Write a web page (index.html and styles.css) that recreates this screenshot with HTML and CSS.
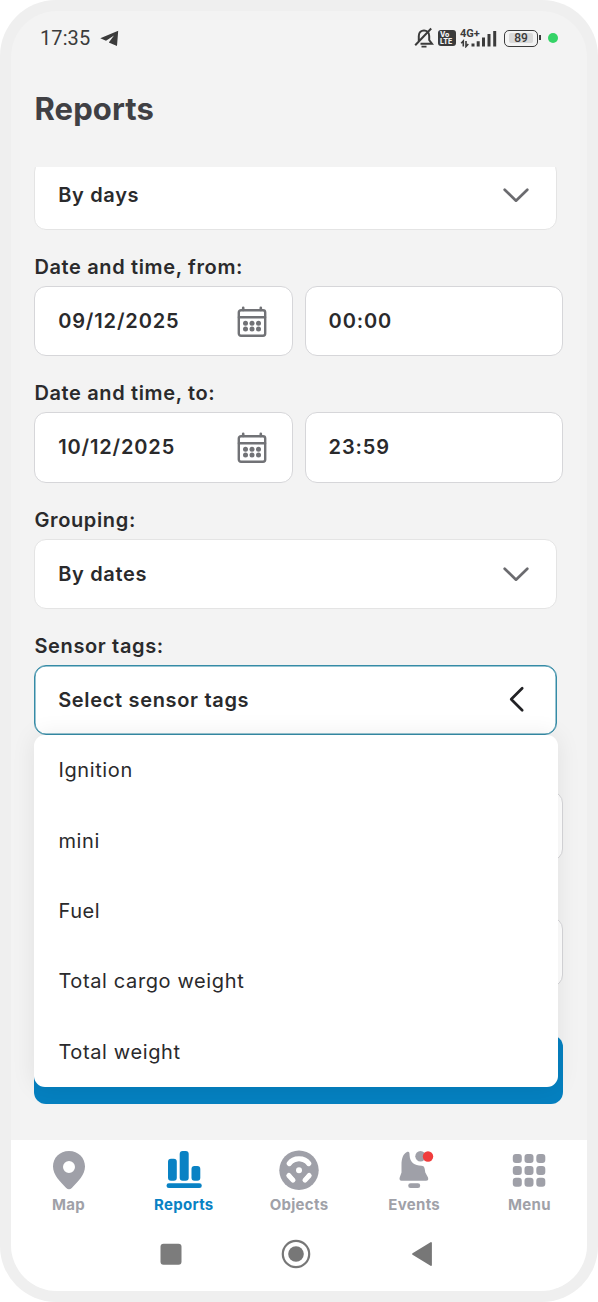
FILE: index.html
```html
<!DOCTYPE html>
<html lang="en">
<head>
<meta charset="utf-8">
<title>Reports</title>
<link rel="stylesheet" href="styles.css">
</head>
<body>
<svg class="defs" width="0" height="0" aria-hidden="true">
  <symbol id="calendar" viewBox="0 0 32 32">
    <rect x="2.8" y="4.3" width="26.4" height="25.4" rx="2.2" fill="none" stroke="#717276" stroke-width="2.4"/>
    <path d="M3 11.2H29M7.2 4V1.8M24.8 4V1.8" stroke="#717276" stroke-width="2.6" stroke-linecap="round"/>
    <g fill="#717276"><circle cx="9.5" cy="17.3" r="2.5"/><circle cx="16" cy="17.3" r="2.5"/><circle cx="22.5" cy="17.3" r="2.5"/><circle cx="9.5" cy="23" r="2.5"/><circle cx="16" cy="23" r="2.5"/><circle cx="22.5" cy="23" r="2.5"/></g>
  </symbol>
  <symbol id="down" viewBox="0 0 28 16">
    <path d="M2.7 2.8L14 13.7L25.3 2.8" fill="none" stroke="#6b6b6f" stroke-width="2.7" stroke-linecap="round" stroke-linejoin="round"/>
  </symbol>
</svg>
<div class="phone">
  <div class="screen">
    <header class="status">
      <span class="clock">17:35</span>
      <svg class="plane" width="19" height="17" viewBox="0 0 19 17"><path d="M.3 8.2L18.2.7L17 16L8.8 12.6L14 5.6L6 10.7Z" fill="#3b3b3b"/></svg>
      <div class="indicators">
        <svg class="mute" width="20" height="22" viewBox="0 0 20 22" fill="none" stroke="#3b3b3b" stroke-width="2"><path d="M4.8 15V9C4.8 1.5 15.2 1.5 15.2 9V13L18 16.8H6.5M1.2 18.3L17.2 1.5"/><path d="M7.5 19.7H12.5" stroke-width="1.8"/></svg>
        <span class="volte"><b>Vo</b><b>LTE</b></span>
        <span class="network">
          <span class="gen">4G+</span>
          <svg width="37" height="17" viewBox="0 0 37 17" fill="#3b3b3b"><path d="M11.5 12.600h3V15.500h-3zM16.700 10.200h3V15.500h-3zM22 6.500h3V15.500h-3zM27.500 3h3V15.500h-3zM33.200 0h3V15.500h-3z"/><path d="M3.300 15.500V10L1.200 12.200M6 10V15.500L8.300 13" fill="none" stroke="#3b3b3b" stroke-width="1.600"/></svg>
        </span>
        <span class="battery"><span class="level">89</span></span>
        <i class="live"></i>
      </div>
    </header>
    <h1 class="title">Reports</h1>
    <main class="form">
      <section class="field first"><div class="box select"><span>By days</span><svg class="chevron"><use href="#down"/></svg></div></section>
      <section class="field">
        <label class="label">Date and time, from:</label>
        <div class="pair"><div class="box"><span>09/12/2025</span><svg class="cal"><use href="#calendar"/></svg></div><div class="box"><span>00:00</span></div></div>
      </section>
      <section class="field">
        <label class="label">Date and time, to:</label>
        <div class="pair"><div class="box"><span>10/12/2025</span><svg class="cal"><use href="#calendar"/></svg></div><div class="box"><span>23:59</span></div></div>
      </section>
      <section class="field">
        <label class="label">Grouping:</label>
        <div class="box select"><span>By dates</span><svg class="chevron"><use href="#down"/></svg></div>
      </section>
      <section class="field">
        <label class="label">Sensor tags:</label>
        <div class="box select open"><span>Select sensor tags</span>
          <svg class="back" width="16" height="28" viewBox="0 0 16 28"><path d="M13.2 2.3L2.2 13.3L13.2 24.300" fill="none" stroke="#222225" stroke-width="2.700" stroke-linecap="round" stroke-linejoin="round"/></svg>
          <ul class="menu"><li>Ignition</li><li>mini</li><li>Fuel</li><li>Total cargo weight</li><li>Total weight</li></ul>
        </div>
      </section>
      <section class="field"><div class="label"></div><div class="box"></div></section>
      <section class="field"><div class="label"></div><div class="box"></div></section>
      <div class="submit"></div>
    </main>
    <nav class="tabs">
      <div class="tab"><svg width="40" height="40" viewBox="0 0 40 40"><path fill-rule="evenodd" d="M20 1C10.5 1 4 8 4 16.5C4 25 11 31.500 17.200 38Q20 40.600 22.800 38C29 31.500 36 25 36 16.500C36 8 29.500 1 20 1ZM20 11A6 6 0 1 1 20 23A6 6 0 1 1 20 11Z" fill="#9fa0a8"/></svg><span>Map</span></div>
      <div class="tab active"><svg width="40" height="40" viewBox="0 0 40 40" fill="#0982c4"><rect x="4" y="8.800" width="8.800" height="22" rx="3"/><rect x="15.700" y="1" width="9" height="29.800" rx="3"/><rect x="27.500" y="16" width="8.800" height="14.800" rx="3"/><rect x="2.500" y="33.300" width="35.300" height="4.800" rx="2.400"/></svg><span>Reports</span></div>
      <div class="tab"><svg width="40" height="40" viewBox="0 0 40 40"><circle cx="20" cy="20.300" r="19.700" fill="#9fa0a8"/><g stroke="#fff" fill="none" stroke-linecap="round"><path d="M10.300 13.500C14.500 7.300 25.500 7.300 29.700 13.500" stroke-width="5.200"/><path d="M9.800 25.500L14 30.200M30.200 25.500L26 30.200" stroke-width="5"/></g><circle cx="20" cy="20" r="8.600" fill="#9fa0a8"/><circle cx="20" cy="20.300" r="3" fill="#fff"/></svg><span>Objects</span></div>
      <div class="tab"><svg width="40" height="40" viewBox="0 0 40 40" fill="#9fa0a8"><path d="M12.500 2.200C15.800 .8 15.500 3.500 15.600 5.500C16 12.500 20.500 15.500 27.500 15.700C30.800 15.800 30.700 18.500 31.300 22.500L34 27.500Q35 30.700 32 30.700H7.500Q4.900 30.500 5.700 27.500L7.500 22.500V15C7.500 8 9.500 3.700 12.500 2.200Z"/><circle cx="26.500" cy="6.200" r="5.200"/><rect x="14.200" y="33.300" width="12" height="4.700" rx="2.350"/><circle cx="34" cy="6.500" r="5.200" fill="#f03c3c"/></svg><span>Events</span></div>
      <div class="tab"><svg width="40" height="40" viewBox="0 0 40 40" fill="#9fa0a8"><rect x="3.800" y="4" width="9" height="9" rx="3"/><rect x="15.500" y="4" width="9" height="9" rx="3"/><rect x="27.300" y="4" width="9" height="9" rx="3"/><rect x="3.800" y="15.900" width="9" height="9" rx="3"/><rect x="15.500" y="15.900" width="9" height="9" rx="3"/><rect x="27.300" y="15.900" width="9" height="9" rx="3"/><rect x="3.800" y="27.700" width="9" height="9" rx="3"/><rect x="15.500" y="27.700" width="9" height="9" rx="3"/><rect x="27.300" y="27.700" width="9" height="9" rx="3"/></svg><span>Menu</span></div>
    </nav>
    <footer class="system">
      <svg width="30" height="30" viewBox="0 0 30 30"><rect x="4.500" y="4.700" width="21" height="21" rx="3" fill="#7c7c7c"/></svg>
      <svg width="30" height="30" viewBox="0 0 30 30"><circle cx="15" cy="15" r="13.200" fill="none" stroke="#777" stroke-width="2.200"/><circle cx="15" cy="15" r="7.800" fill="#777"/></svg>
      <svg width="30" height="30" viewBox="0 0 30 30"><path d="M6 15L24 4V26Z" fill="#777" stroke="#777" stroke-width="1.800" stroke-linejoin="round"/></svg>
    </footer>
  </div>
</div>
</body>
</html>
```
FILE: styles.css
```css
* { box-sizing: border-box; }
body { margin: 0; background: #fff; font-family: Inter, sans-serif; color: #2a2a2c; }
.defs { display: block; }
.phone { width: 598px; height: 1302px; padding: 11px; background: #efefef; border-radius: 56px; }
.screen { height: 1280px; background: #f3f3f3; border-radius: 46px; overflow: hidden; display: flex; flex-direction: column; }
.status { height: 54px; padding: 0 29px; display: flex; align-items: center; color: #3b3b3b; }
.clock { font: 400 20px Roboto, sans-serif; letter-spacing: .1px; width: 60px; }
.indicators { margin-left: auto; display: flex; align-items: center; }
.mute { margin-right: -1px; }
.volte { width: 18px; height: 16px; margin: 0 4px 0 5px; border-radius: 3px; background: #3b3b3b; color: #f3f3f3; display: flex; flex-direction: column; padding: 1px 2px; font-size: 7px; line-height: 7px; }
.volte b { font-weight: 800; }
.network { width: 38px; height: 19px; display: grid; }
.network > * { grid-area: 1 / 1; }
.network svg { align-self: end; }
.gen { font: 700 11px/11px Roboto, sans-serif; position: relative; top: -1px; }
.battery { width: 34px; height: 17px; margin-left: 6px; padding: 2px 4px; border: 1.5px solid #3b3b3b; border-radius: 5px; position: relative; }
.battery::after { content: ""; position: absolute; right: -4px; top: 4px; width: 2px; height: 5px; background: #3b3b3b; }
.level { display: block; height: 10px; text-align: center; background: #d9d9d9; border-radius: 2px; font: 500 12px/10px Roboto, sans-serif; }
.live { width: 10px; height: 10px; border-radius: 50%; background: #34d366; margin-left: 10px; }
.title { height: 102px; margin: 0; padding: 24px 23.500px 0; font-size: 31px; line-height: 40px; font-weight: 700; letter-spacing: .1px; color: #404044; }
.form { height: 972.500px; padding: 0 23.800px 0 23.400px; overflow: hidden; }
.first { margin-top: -7px; }
.label { display: block; height: 56px; padding-top: 25px; font-size: 20px; line-height: 24px; font-weight: 600; letter-spacing: .64px; }
.box { height: 70.200px; display: flex; align-items: center; justify-content: space-between; padding: 0 24px 0 22.800px; border: 1.500px solid #d6d6d9; border-radius: 12px; background: #fff; font-size: 20px; font-weight: 600; letter-spacing: .67px; }
.pair { display: grid; grid-template-columns: 1fr 1fr; gap: 12px; }
.pair .box { letter-spacing: .85px; }
.select { width: 523px; border-color: #e4e4e4; padding-right: 26px; }
.chevron { width: 28px; height: 16px; }
.cal { width: 32px; height: 32px; margin-top: 2px; }
.open { position: relative; border-color: #358ba6; box-shadow: inset 0 0 0 .5px #358ba6; }
.back { margin-right: 5.500px; }
.menu { position: absolute; z-index: 1; top: 69.500px; left: -1px; width: 523.500px; margin: 0; padding: 0; list-style: none; background: #fff; border-radius: 11px; box-shadow: 0 0 24px rgba(0,0,0,.08); }
.menu li { height: 70.300px; padding-left: 24px; display: flex; align-items: center; font-weight: 400; letter-spacing: .62px; }
.submit { height: 69px; margin-top: 48px; border-radius: 12px; background: #0580c0; }
.tabs { height: 84px; padding-top: 10.500px; background: #fff; display: grid; grid-template-columns: repeat(5, 1fr); }
.tab { display: flex; flex-direction: column; align-items: center; gap: 5px; color: #a0a1a8; font-size: 15px; line-height: 20px; font-weight: 700; letter-spacing: .3px; }
.tab svg { margin-top: -.5px; }
.active { color: #0982c4; }
.system { flex: 1; padding: 15.500px 0 0 144.500px; background: #fff; display: flex; gap: 95.700px; }
```
